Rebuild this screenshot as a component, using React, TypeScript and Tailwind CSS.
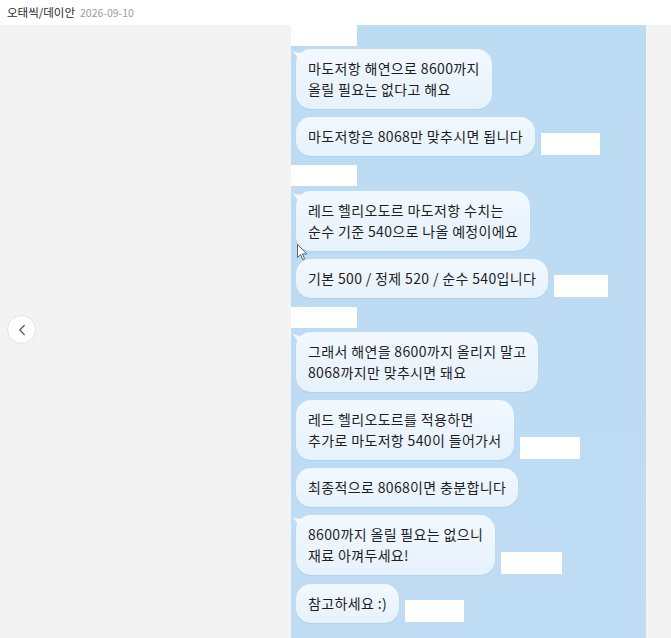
import { ChevronLeft } from "lucide-react";

type Msg = {
  lines: string[];
  tail?: boolean;
  box?: number; // width of redacted stamp on right
  mt: string;
};

const messages: Msg[] = [
  { lines: ["마도저항 해연으로 8600까지", "올릴 필요는 없다고 해요"], tail: true, mt: "mt-[3px]" },
  { lines: ["마도저항은 8068만 맞추시면 됩니다"], box: 59, mt: "mt-[8px]" },
  { lines: ["레드 헬리오도르 마도저항 수치는", "순수 기준 540으로 나올 예정이에요"], tail: true, mt: "mt-[5px]" },
  { lines: ["기본 500 / 정제 520 / 순수 540입니다"], box: 54, mt: "mt-[8px]" },
  { lines: ["그래서 해연을 8600까지 올리지 말고", "8068까지만 맞추시면 돼요"], tail: true, mt: "mt-[4px]" },
  { lines: ["레드 헬리오도르를 적용하면", "추가로 마도저항 540이 들어가서"], box: 60, mt: "mt-[8px]" },
  { lines: ["최종적으로 8068이면 충분합니다"], mt: "mt-[8px]" },
  { lines: ["8600까지 올릴 필요는 없으니", "재료 아껴두세요!"], tail: true, box: 61, mt: "mt-[8px]" },
  { lines: ["참고하세요 :)"], box: 59, mt: "mt-[9px]" },
];

function NameBox({ mt }: { mt: string }) {
  return <div className={`${mt} h-[21px] w-[66px] bg-white`} />;
}

function Bubble({ m }: { m: Msg }) {
  return (
    <div className={`${m.mt} flex items-end gap-[6px] pl-[5px]`}>
      <div className="relative rounded-[15px] bg-gradient-to-b from-[#f2f8fe] to-[#e6f2fc] px-[12px] py-[9px] text-[14px] leading-[21px] tracking-[0.35px] text-[#1e1e1e] shadow-[0_1px_1px_rgba(80,120,160,0.12)]">
        {m.tail && (
          <svg
            className="absolute -left-[6px] top-[0px]"
            width="14"
            height="10"
            viewBox="0 0 14 10"
          >
            <path d="M0 0 C4 3 8 4 14 4 L14 10 L8 10 C6 6 3 2 0 0 Z" fill="#f2f8fe" />
          </svg>
        )}
        {m.lines.map((l, i) => (
          <div key={i} className="whitespace-nowrap">
            {l}
          </div>
        ))}
      </div>
      {m.box && <div className="mb-[1px] h-[22px] bg-white" style={{ width: m.box }} />}
    </div>
  );
}

export default function App() {
  const nameBefore = [0, 2, 4];
  return (
    <div
      className="relative flex h-[638px] w-[671px] flex-col overflow-hidden bg-[#f3f3f3]"
      style={{ fontFamily: '"Noto Sans CJK KR", "Noto Sans", sans-serif' }}
    >
      {/* header */}
      <div className="flex h-[25px] shrink-0 items-center gap-[5px] bg-white px-[7px]">
        <span className="text-[11.5px] text-[#2a2a2a]">오태씩/데이안</span>
        <span className="text-[10.5px] text-[#9c9c9c]">2026-09-10</span>
      </div>

      <div className="flex flex-1">
        {/* left pane */}
        <div className="flex w-[291px] items-center pl-[7px]">
          <div className="mt-[-4px] flex h-[29px] w-[29px] items-center justify-center rounded-full border border-[#e2e2e2] bg-white">
            <ChevronLeft size={18} strokeWidth={1.6} className="text-[#555]" />
          </div>
        </div>

        {/* chat pane */}
        <div className="flex w-[355px] flex-col items-start bg-gradient-to-b from-[#bcdcf3] to-[#bedcf3]">
          {messages.map((m, i) => (
            <div key={i} className="flex flex-col items-start">
              {nameBefore.includes(i) && <NameBox mt={i === 0 ? "mt-0" : "mt-[9px]"} />}
              <Bubble m={m} />
            </div>
          ))}
        </div>
      </div>

      {/* cursor */}
      <svg className="absolute left-[297px] top-[244px]" width="11" height="17" viewBox="0 0 11 17">
        <path d="M0.5 0.5 L0.5 13.5 L3.6 10.6 L5.8 15.6 L7.6 14.8 L5.5 9.9 L9.8 9.9 Z" fill="#fff" stroke="#555" strokeWidth="0.9" />
      </svg>
    </div>
  );
}
